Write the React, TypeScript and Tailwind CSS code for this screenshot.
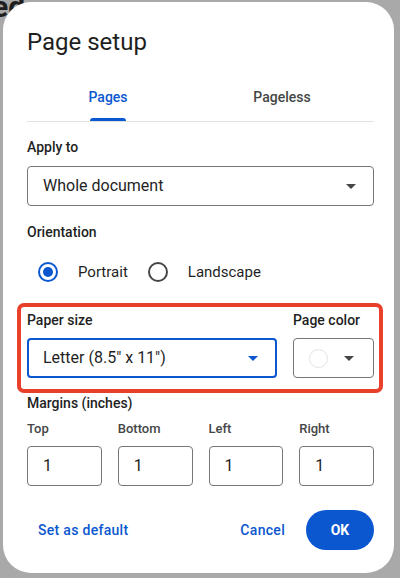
const font = { fontFamily: "Roboto, 'Open Sans', Arial, sans-serif" };

function Caret({ color = "border-t-[#444746]" }: { color?: string }) {
  return (
    <span
      className={`h-0 w-0 border-l-[5px] border-r-[5px] border-t-[5px] border-l-transparent border-r-transparent ${color}`}
    />
  );
}

function Radio({ checked }: { checked?: boolean }) {
  return (
    <span
      className={
        checked
          ? "flex h-5 w-5 items-center justify-center rounded-full border-2 border-[#0b57d0]"
          : "flex h-5 w-5 items-center justify-center rounded-full border-2 border-[#444746]"
      }
    >
      {checked ? <span className="h-2.5 w-2.5 rounded-full bg-[#0b57d0]" /> : null}
    </span>
  );
}

function MarginField({ label }: { label: string }) {
  return (
    <div className="flex w-[75px] flex-col">
      <div className="text-[13px] font-medium leading-[18px] text-[#444746]">{label}</div>
      <div className="mt-[8px] flex h-[40px] items-center rounded-[4px] border border-[#747775] pl-[15px] text-[16px] text-[#1f1f1f]">
        1
      </div>
    </div>
  );
}

export default function App() {
  return (
    <div className="relative h-[578px] w-[400px] overflow-hidden bg-[#a9a9a9] pl-[3px] pt-[2px]" style={font}>
      {/* document text peeking out behind the dialog */}
      <div aria-hidden className="absolute left-[-8px] top-[-16px] text-[30px] font-bold text-[#1f1f1f]">
        ed
      </div>

      <div className="relative h-[571px] w-[391px] rounded-[28px] bg-white pl-[24px] pr-[20px] pt-[24px]">
        <h1 className="text-[24px] leading-[32px] text-[#1f1f1f]">Page setup</h1>

        {/* tabs */}
        <div className="mt-[15px] -ml-[6px] flex w-[348px]">
          <div className="relative flex h-[48px] flex-1 items-center justify-center text-[14px] font-medium text-[#0b57d0]">
            Pages
            <span className="absolute bottom-0 left-1/2 h-[3px] w-[36px] -translate-x-1/2 rounded-t-[3px] bg-[#0b57d0]" />
          </div>
          <div className="flex h-[48px] flex-1 items-center justify-center text-[14px] font-medium text-[#444746]">
            Pageless
          </div>
        </div>
        <div className="h-px w-[347px] bg-[#e1e3e1]" />

        <div className="mt-[15px] text-[14px] font-medium leading-[20px] text-[#1f1f1f]">Apply to</div>
        <div className="mt-[9px] flex h-[40px] w-[347px] items-center justify-between rounded-[4px] border border-[#747775] pl-[15px] pr-[17px] text-[16px] text-[#1f1f1f]">
          <span>Whole document</span>
          <Caret />
        </div>

        <div className="mt-[16px] text-[14px] font-medium leading-[20px] text-[#1f1f1f]">Orientation</div>
        <div className="mt-[10px] flex h-[40px] items-center pl-[11px] text-[15px] text-[#1f1f1f]">
          <Radio checked />
          <span className="ml-[20px]">Portrait</span>
          <span className="ml-[20px]">
            <Radio />
          </span>
          <span className="ml-[20px]">Landscape</span>
        </div>

        <div className="mt-[18px] flex gap-[16px]">
          <div className="flex w-[250px] flex-col">
            <div className="text-[14px] font-medium leading-[20px] text-[#1f1f1f]">Paper size</div>
            <div className="mt-[8px] flex h-[40px] items-center justify-between rounded-[4px] border-2 border-[#0b57d0] pl-[14px] pr-[17px] text-[16px] text-[#1f1f1f]">
              <span>Letter (8.5" x 11")</span>
              <Caret color="border-t-[#0b57d0]" />
            </div>
          </div>
          <div className="flex w-[81px] flex-col">
            <div className="whitespace-nowrap text-[14px] font-medium leading-[20px] text-[#1f1f1f]">Page color</div>
            <div className="mt-[8px] flex h-[40px] items-center rounded-[4px] border border-[#747775] pl-[15px]">
              <span className="h-[19px] w-[19px] rounded-full border border-[#e3e3e3] bg-white" />
              <span className="ml-[16px] flex">
                <Caret />
              </span>
            </div>
          </div>
        </div>

        <div className="mt-[15px] text-[14px] font-medium leading-[20px] text-[#1f1f1f]">Margins (inches)</div>
        <div className="mt-[7px] flex gap-[16px]">
          <MarginField label="Top" />
          <MarginField label="Bottom" />
          <MarginField label="Left" />
          <MarginField label="Right" />
        </div>

        <div className="mt-[24px] flex w-[347px] items-center">
          <button type="button" className="ml-[11px] text-[14px] font-medium tracking-[0.3px] text-[#0b57d0]">
            Set as default
          </button>
          <button type="button" className="ml-auto text-[14px] font-medium tracking-[0.3px] text-[#0b57d0]">
            Cancel
          </button>
          <button
            type="button"
            className="ml-[21px] flex h-[40px] w-[68px] items-center justify-center rounded-full bg-[#0b57d0] text-[14px] font-bold text-white"
          >
            OK
          </button>
        </div>

        {/* red annotation frame */}
        <div className="absolute left-[14px] top-[301px] h-[90px] w-[366px] rounded-[7px] border-[4px] border-[#e8402b]" />
      </div>
    </div>
  );
}
